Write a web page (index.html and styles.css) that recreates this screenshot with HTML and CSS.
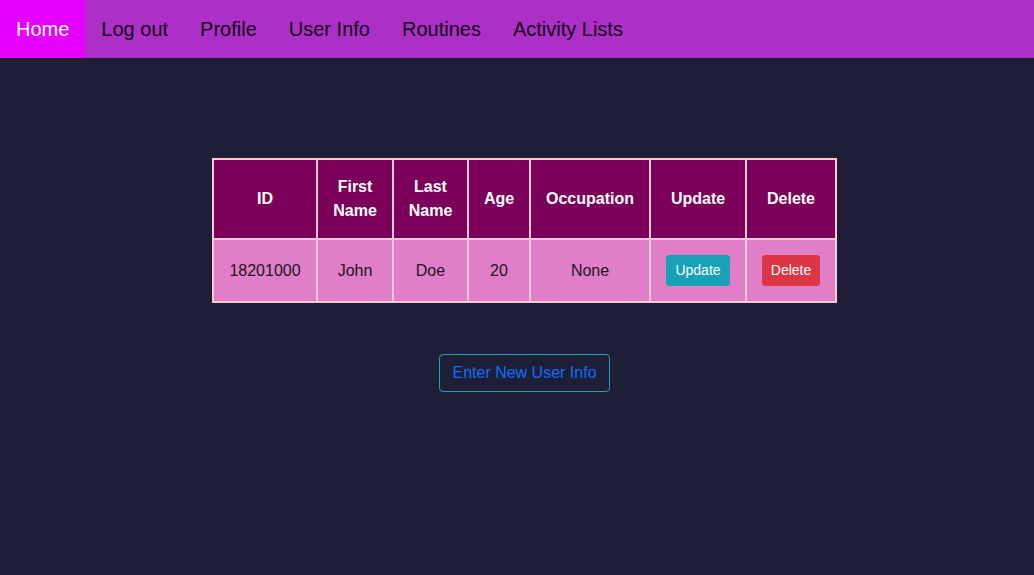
FILE: index.html
```html
<!DOCTYPE html>
<html>
<head>
<meta charset="utf-8">
<link rel="stylesheet" href="styles.css">
</head>
<body>
<nav class="topnav">
  <a class="nav-link active" href="#">Home</a>
  <a class="nav-link" href="#">Log out</a>
  <a class="nav-link" href="#">Profile</a>
  <a class="nav-link" href="#">User Info</a>
  <a class="nav-link" href="#">Routines</a>
  <a class="nav-link" href="#">Activity Lists</a>
</nav>
<main class="content">
  <table class="user-table">
    <colgroup>
      <col class="c-id"><col class="c-first"><col class="c-last"><col class="c-age"><col class="c-occ"><col class="c-upd"><col class="c-del">
    </colgroup>
    <thead>
      <tr>
        <th>ID</th>
        <th>First Name</th>
        <th>Last Name</th>
        <th>Age</th>
        <th>Occupation</th>
        <th>Update</th>
        <th>Delete</th>
      </tr>
    </thead>
    <tbody>
      <tr>
        <td>18201000</td>
        <td>John</td>
        <td>Doe</td>
        <td>20</td>
        <td>None</td>
        <td><button class="btn-sm btn-info">Update</button></td>
        <td><button class="btn-sm btn-danger">Delete</button></td>
      </tr>
    </tbody>
  </table>
  <div class="actions">
    <button class="btn-outline">Enter New User Info</button>
  </div>
</main>
</body>
</html>
```
FILE: styles.css
```css
html, body {
  margin: 0;
  padding: 0;
}
body {
  background: #1e1f37;
  font-family: "Liberation Sans", Arial, sans-serif;
  min-height: 575px;
}
.topnav {
  display: flex;
  background: #ac2fc7;
  height: 58px;
}
.nav-link {
  display: block;
  padding: 0 16px;
  line-height: 58px;
  font-size: 20px;
  color: #120512;
  text-decoration: none;
}
.nav-link.active {
  background: #e600fe;
  color: #ffffff;
}
.content {
  display: flex;
  flex-direction: column;
  align-items: center;
  padding-left: 15px;
}
.user-table {
  margin-top: 100px;
  width: 623px;
  table-layout: fixed;
  border-collapse: collapse;
  font-size: 16px;
  text-align: center;
}
.c-id { width: 104px; }
.c-first { width: 76px; }
.c-last { width: 75px; }
.c-age { width: 62px; }
.c-occ { width: 120px; }
.c-upd { width: 96px; }
.c-del { width: 90px; }
.user-table th,
.user-table td {
  border: 2px solid #f5ccd4;
  padding: 15px 10px;
  line-height: 24px;
  vertical-align: middle;
}
.user-table th {
  background: #7b0059;
  color: #ffffff;
  font-weight: bold;
}
.user-table td {
  background: #e07fc8;
  color: #1b1420;
}
.btn-sm {
  font-family: "Liberation Sans", Arial, sans-serif;
  font-size: 14px;
  line-height: 21px;
  padding: 4px 8px;
  border: 1px solid transparent;
  border-radius: 3px;
  color: #ffffff;
  vertical-align: middle;
}
.btn-info {
  background: #17a2b8;
  border-color: #17a2b8;
}
.btn-danger {
  background: #dc3545;
  border-color: #dc3545;
}
.actions {
  margin-top: 51px;
}
.btn-outline {
  font-family: "Liberation Sans", Arial, sans-serif;
  font-size: 16px;
  line-height: 24px;
  padding: 6px 12px;
  background: transparent;
  border: 1px solid #17a2b8;
  border-radius: 4px;
  color: #0d6efd;
}
```
